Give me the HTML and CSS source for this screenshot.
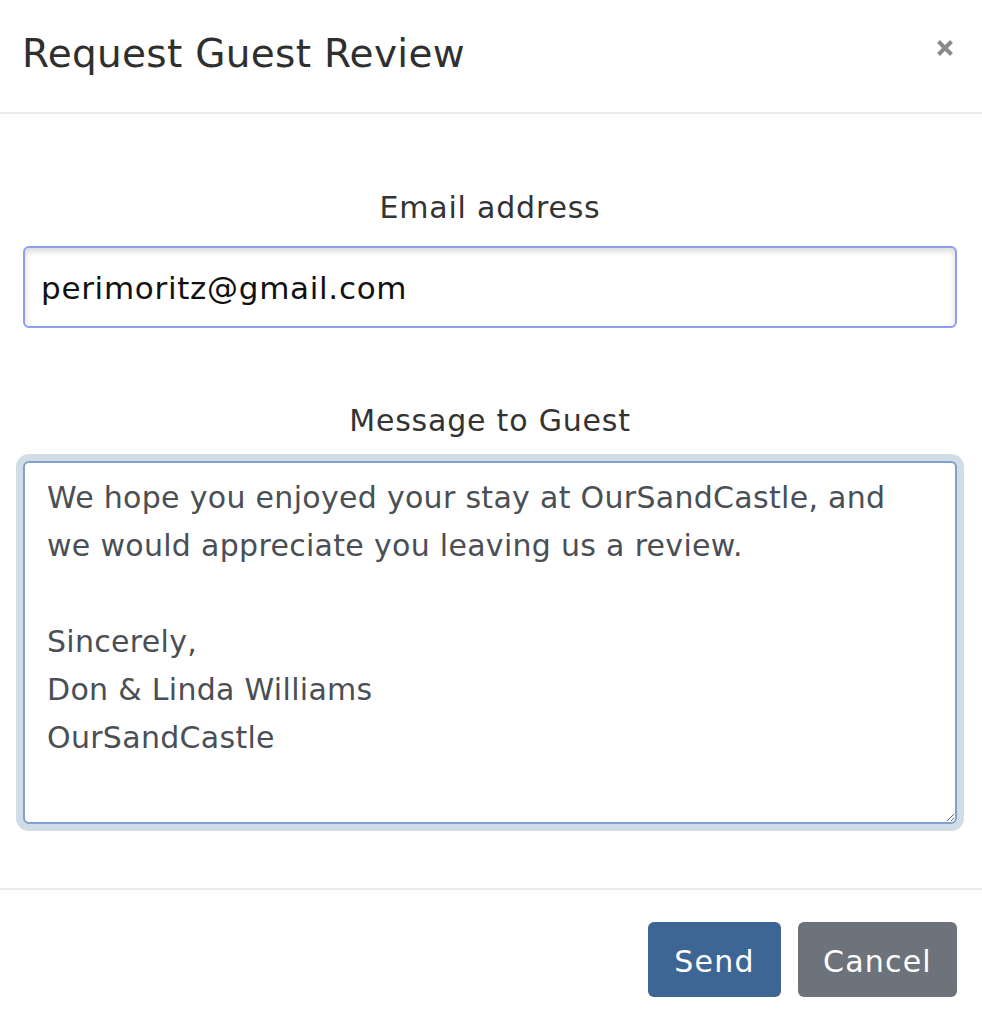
FILE: index.html
```html
<!DOCTYPE html>
<html lang="en">
<head>
<meta charset="utf-8">
<title>Request Guest Review</title>
<link rel="stylesheet" href="styles.css">
</head>
<body>
<div class="modal">
  <div class="modal-header">
    <h1 class="modal-title">Request Guest Review</h1>
    <button class="close" type="button" aria-label="Close">
      <svg width="18" height="18" viewBox="0 0 18 18"><path d="M2.5 2.5 L15.5 15.5 M15.5 2.5 L2.5 15.5" stroke="#8a8a8a" stroke-width="4" stroke-linecap="butt"/></svg>
    </button>
  </div>
  <div class="modal-body">
    <div class="form-group first">
      <label class="form-label">Email address</label>
      <div class="input-field">perimoritz@gmail.com</div>
    </div>
    <div class="form-group second">
      <label class="form-label">Message to Guest</label>
      <textarea class="textarea-field" rows="7">We hope you enjoyed your stay at OurSandCastle, and we would appreciate you leaving us a review.

Sincerely,
Don &amp; Linda Williams
OurSandCastle</textarea>
    </div>
  </div>
  <div class="modal-footer">
    <button class="btn btn-primary" type="button">Send</button>
    <button class="btn btn-secondary" type="button">Cancel</button>
  </div>
</div>
</body>
</html>
```
FILE: styles.css
```css
html, body {
  margin: 0;
  padding: 0;
  background: #ffffff;
}
body {
  font-family: "DejaVu Sans", "Open Sans", sans-serif;
  color: #333333;
}
.modal {
  width: 982px;
}
.modal-header {
  height: 114px;
  border-bottom: 2px solid #e9e9ee;
  display: flex;
  align-items: flex-start;
  justify-content: space-between;
  padding: 0 28px 0 22px;
  box-sizing: border-box;
}
.modal-title {
  margin: 0;
  padding-top: 28px;
  font-size: 39px;
  letter-spacing: 0.3px;
  line-height: 52px;
  font-weight: 400;
  color: #2f2f2f;
}
.close {
  margin-top: 39px;
  padding: 0;
  border: 0;
  background: transparent;
  width: 18px;
  height: 18px;
}
.close svg { display: block; }
.modal-body {
  padding: 0 25px 0 23px;
}
.form-group {
  display: flex;
  flex-direction: column;
}
.form-group.first { padding-top: 74px; }
.form-group.second { padding-top: 73px; }
.form-label {
  text-align: center;
  font-size: 30px;
  letter-spacing: 0.8px;
  line-height: 40px;
  color: #333333;
  margin-bottom: 18px;
}
.input-field {
  height: 82px;
  box-sizing: border-box;
  border: 2px solid #8d9ef2;
  border-radius: 6px;
  box-shadow: inset 0 3px 6px rgba(0,0,0,0.16);
  padding: 1px 16px 0;
  font-size: 31px;
  letter-spacing: 0.7px;
  line-height: 78px;
  color: #111111;
}
.textarea-field {
  display: block;
  margin-top: 2px;
  height: 363px;
  box-sizing: border-box;
  border: 2px solid #7fa2cc;
  border-radius: 6px;
  box-shadow: 0 0 0 7px #d2dce7;
  padding: 11px 22px;
  font-family: inherit;
  font-size: 30px;
  letter-spacing: 0.3px;
  line-height: 48px;
  color: #4a4f55;
  resize: both;
  outline: none;
}
.modal-footer {
  margin-top: 64px;
  border-top: 2px solid #e9e9ee;
  display: flex;
  justify-content: flex-end;
  gap: 17px;
  padding: 32px 25px 21px 0;
}
.btn {
  height: 75px;
  border: 0;
  border-radius: 6px;
  font-family: inherit;
  font-size: 30px;
  letter-spacing: 1.2px;
  color: #ffffff;
  padding: 3px 10px 0;
}
.btn-primary { background: #3e6694; width: 133px; }
.btn-secondary { background: #6d737b; width: 159px; }
```
